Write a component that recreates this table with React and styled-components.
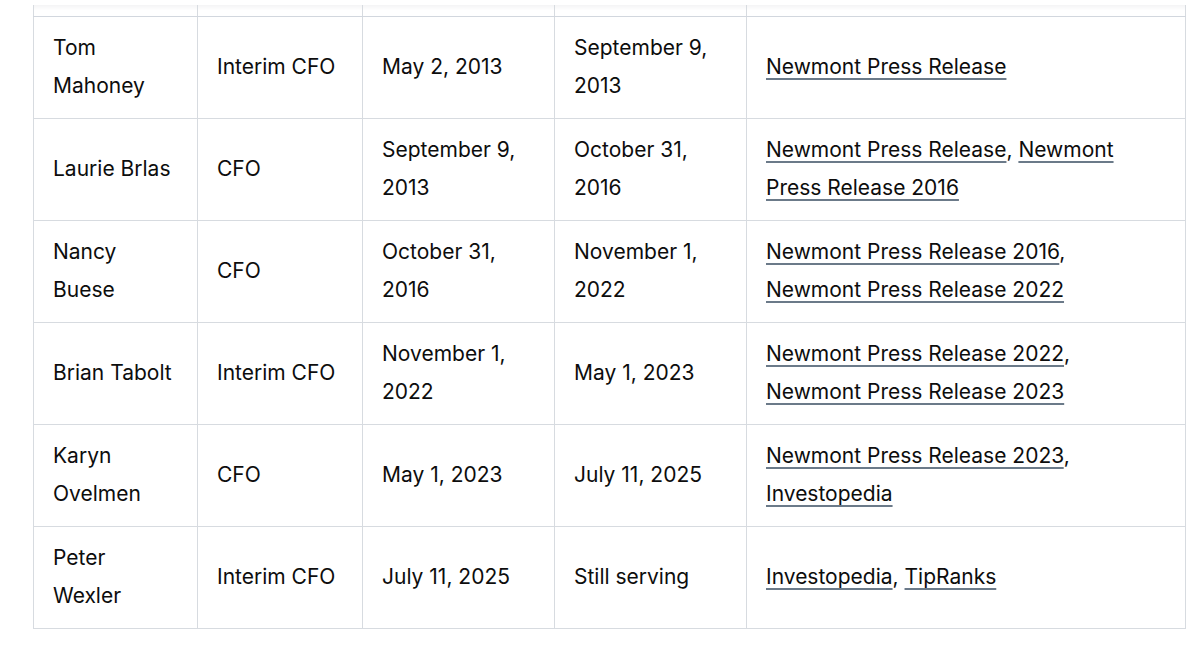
import React from 'react';
import styled, { createGlobalStyle } from 'styled-components';

const GlobalStyle = createGlobalStyle`
  html, body {
    margin: 0;
    padding: 0;
    background: #ffffff;
  }
  body {
    font-family: Inter, "Noto Sans", "Liberation Sans", sans-serif;
    color: #0d0d0d;
    -webkit-font-smoothing: antialiased;
  }
`;

const Page = styled.div`
  width: 1200px;
  height: 645px;
  overflow: hidden;
  padding: 5px 0 0 33px;
  box-sizing: border-box;
`;

const Table = styled.table`
  border-collapse: collapse;
  table-layout: fixed;
  width: 1152px;
  font-size: 21px;
  line-height: 38px;
`;

const HeadCell = styled.th`
  height: 11px;
  padding: 0;
  border-left: 1px solid #d7dbe0;
  border-right: 1px solid #d7dbe0;
  border-bottom: 1px solid #d2d7de;
  background: linear-gradient(#f4f4f5, #ffffff 50%);
`;

const Cell = styled.td`
  border: 1px solid #d7dbe0;
  padding: 12px 24px 13px 19px;
  vertical-align: middle;
  height: 76px;
  box-sizing: content-box;
`;

const Link = styled.a`
  color: #0d0d0d;
  text-decoration: underline;
  text-decoration-color: #6b7a89;
  text-decoration-thickness: 2px;
  text-underline-offset: 4px;
`;

const columns = [164, 165, 192, 192, 439];

const rows = [
  { name: 'Tom Mahoney', role: 'Interim CFO', start: 'May 2, 2013', end: 'September 9, 2013', links: ['Newmont Press Release'] },
  { name: 'Laurie Brlas', role: 'CFO', start: 'September 9, 2013', end: 'October 31, 2016', links: ['Newmont Press Release', 'Newmont Press Release 2016'] },
  { name: 'Nancy Buese', role: 'CFO', start: 'October 31, 2016', end: 'November 1, 2022', links: ['Newmont Press Release 2016', 'Newmont Press Release 2022'] },
  { name: 'Brian Tabolt', role: 'Interim CFO', start: 'November 1, 2022', end: 'May 1, 2023', links: ['Newmont Press Release 2022', 'Newmont Press Release 2023'] },
  { name: 'Karyn Ovelmen', role: 'CFO', start: 'May 1, 2023', end: 'July 11, 2025', links: ['Newmont Press Release 2023', 'Investopedia'] },
  { name: 'Peter Wexler', role: 'Interim CFO', start: 'July 11, 2025', end: 'Still serving', links: ['Investopedia', 'TipRanks'] },
];

const App = () => (
  <Page>
    <GlobalStyle />
    <Table>
      <colgroup>
        {columns.map((w, i) => <col key={i} style={{ width: w }} />)}
      </colgroup>
      <thead>
        <tr>
          {columns.map((_, i) => <HeadCell key={i} />)}
        </tr>
      </thead>
      <tbody>
        {rows.map(r => (
          <tr key={r.name}>
            <Cell>{r.name}</Cell>
            <Cell>{r.role}</Cell>
            <Cell>{r.start}</Cell>
            <Cell>{r.end}</Cell>
            <Cell>
              {r.links.map((l, i) => (
                <React.Fragment key={i}>
                  {i > 0 && ', '}
                  <Link href="#">{l}</Link>
                </React.Fragment>
              ))}
            </Cell>
          </tr>
        ))}
      </tbody>
    </Table>
  </Page>
);

export default App;
